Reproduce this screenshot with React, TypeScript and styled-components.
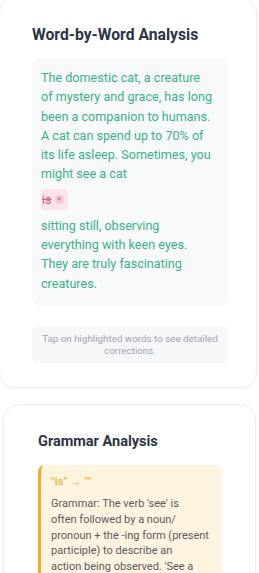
import React from "react";
import styled, { createGlobalStyle } from "styled-components";

const Global = createGlobalStyle`
  html, body { margin: 0; padding: 0; background: #ffffff; }
  body { font-family: Roboto, "Noto Sans", Arial, sans-serif; overflow: hidden; }
  * { box-sizing: border-box; }
`;

const Page = styled.div`
  width: 259px;
  display: flex;
  flex-direction: column;
  gap: 16px;
`;

const Card = styled.section<{ $inset: number; $right: number; $shift: number; $width: number; $top: number; $padTop: number }>`
  width: ${(p) => p.$width}px;
  margin-left: ${(p) => p.$shift}px;
  margin-top: ${(p) => p.$top}px;
  background: #ffffff;
  border: 1px solid #eceef1;
  border-radius: 16px;
  padding: ${(p) => p.$padTop}px ${(p) => p.$right}px 24px ${(p) => p.$inset}px;
  box-shadow: 0 1px 3px rgba(20, 30, 50, 0.04);
`;

const Title = styled.h2<{ $size: number }>`
  margin: 0 0 13px;
  font-size: ${(p) => p.$size}px;
  line-height: 20px;
  font-weight: 700;
  color: #2b3445;
`;

const TextBox = styled.div`
  background: #f7f9fa;
  border-radius: 8px;
  padding: 10px 6px 13px 9px;
  font-size: 12.6px;
  line-height: 19.3px;
  color: #37b18a;
`;

const Line = styled.span`
  display: block;
  white-space: nowrap;
`;

const ErrorPill = styled.span`
  display: inline-flex;
  align-items: center;
  gap: 3px;
  margin: 5px 0 6px;
  height: 21px;
  padding: 0 4px 0 1px;
  border-radius: 4px;
  background: #fde4eb;
  color: #e0587f;
`;

const Struck = styled.span`
  text-decoration: line-through;
  font-size: 12.6px;
`;

const XDot = styled.span`
  display: inline-flex;
  align-items: center;
  justify-content: center;
  width: 9px;
  height: 9px;
  border-radius: 50%;
  background: #f8c6d4;
  color: #e0587f;
  font-size: 8px;
  line-height: 1;
`;

const Hint = styled.div`
  margin-top: 20px;
  background: #f6f7f9;
  border-radius: 6px;
  padding: 7px 4px 6px;
  text-align: center;
  font-size: 9.8px;
  line-height: 12px;
  color: #a0a6b1;
`;

const Issue = styled.div`
  background: #fff4df;
  border-left: 3px solid #f4ab1f;
  border-radius: 7px;
  padding: 8px 6px 10px 10px;
`;

const IssueHead = styled.div`
  font-size: 11.5px;
  line-height: 16px;
  font-weight: 500;
  color: #f2b53a;
  margin-bottom: 7px;
`;

const IssueBody = styled.div`
  font-size: 11px;
  line-height: 15.8px;
  color: #565c66;
`;

const firstPart = [
  "The domestic cat, a creature",
  "of mystery and grace, has long",
  "been a companion to humans.",
  "A cat can spend up to 70% of",
  "its life asleep. Sometimes, you",
  "might see a cat",
];

const secondPart = ["sitting still, observing", "everything with keen eyes.", "They are truly fascinating", "creatures."];

const grammarLines = [
  "Grammar: The verb 'see' is",
  "often followed by a noun/",
  "pronoun + the -ing form (present",
  "participle) to describe an",
  "action being observed. 'See a",
  "cat sitting' is the natural way to",
  "express this.",
];

export default function App() {
  return (
    <>
      <Global />
      <Page>
        <Card $inset={32} $right={28} $shift={-1} $width={258} $top={-3} $padTop={27}>
          <Title $size={15.7}>Word-by-Word Analysis</Title>
          <TextBox>
            {firstPart.map((l) => (
              <Line key={l}>{l}</Line>
            ))}
            <ErrorPill>
              <Struck>is</Struck>
              <XDot>×</XDot>
            </ErrorPill>
            {secondPart.map((l) => (
              <Line key={l}>{l}</Line>
            ))}
          </TextBox>
          <Hint>Tap on highlighted words to see detailed corrections.</Hint>
        </Card>
        <Card $inset={34} $right={33} $shift={3} $width={253} $top={0} $padTop={27}>
          <Title $size={14.5}>Grammar Analysis</Title>
          <Issue>
            <IssueHead>"is" → ""</IssueHead>
            <IssueBody>
              {grammarLines.map((l) => (
                <Line key={l}>{l}</Line>
              ))}
            </IssueBody>
          </Issue>
        </Card>
      </Page>
    </>
  );
}
